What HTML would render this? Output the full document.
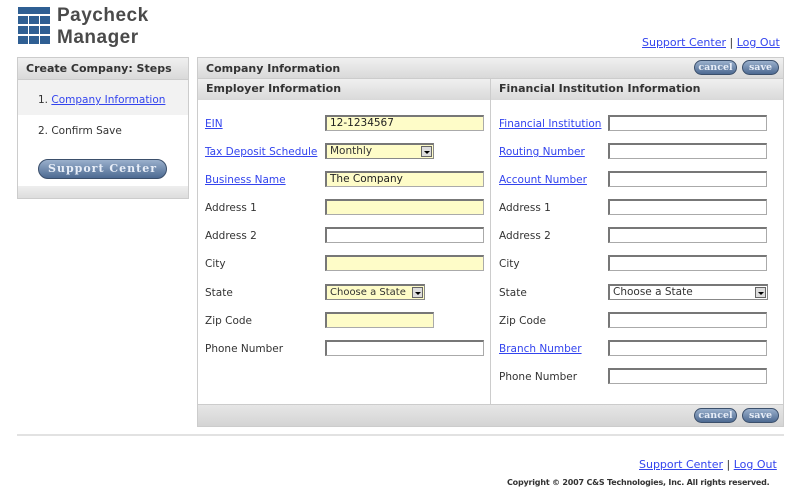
<!DOCTYPE html>
<html><head><meta charset="utf-8"><style>
*{margin:0;padding:0;box-sizing:border-box}
body{width:800px;height:500px;background:#fff;font-family:Verdana,"DejaVu Sans",sans-serif;font-size:11px;color:#333;position:relative;overflow:hidden}
.a{position:absolute}
.lnk{color:#3344ee;text-decoration:underline}
.lbl{position:absolute;font-size:10.5px;line-height:14px}
.in{position:absolute;height:16px;border:1px solid #aaa;border-top:2px solid #777;border-left:2px solid #777;background:#fff;font-size:10.5px;line-height:13px;padding-left:3px;color:#222}
.y{background:#fefcc8}
.hdr{position:absolute;background:linear-gradient(#f0f0f0,#d9d9d9);font-weight:bold;font-size:11px;color:#333;line-height:21px;padding-left:8px}
.btn{position:absolute;height:15px;border-radius:8px;background:linear-gradient(#9ab0cc,#4d6a92);border:1px solid #3b4f6b;color:#e8eef8;font-weight:bold;font-size:9.5px;text-align:center;line-height:13px;font-family:"DejaVu Serif",serif}
.sel{position:absolute;height:16px;border:1px solid #888;border-top:2px solid #777;border-left:2px solid #777;font-size:10.5px;line-height:13px;padding-left:3px;white-space:nowrap;overflow:hidden}
.sel i{position:absolute;right:1px;top:1px;width:11px;height:11px;background:#ddd;border:1px solid #666}
.sel i:after{content:"";position:absolute;left:2px;top:4px;border-left:3px solid transparent;border-right:3px solid transparent;border-top:3px solid #000}
.lg{position:absolute;left:57px;font:bold 19px/22px 'Liberation Sans',sans-serif;color:#4a4a4a;letter-spacing:0.5px}
</style></head><body>
<div class="a" style="left:18px;top:7px;width:32px;height:7px;background:#2f5f93"></div>
<div class="a" style="left:18px;top:16px;width:10px;height:8px;background:#2f5f93"></div>
<div class="a" style="left:29px;top:16px;width:10px;height:8px;background:#2f5f93"></div>
<div class="a" style="left:40px;top:16px;width:10px;height:8px;background:#2f5f93"></div>
<div class="a" style="left:18px;top:26px;width:10px;height:8px;background:#2f5f93"></div>
<div class="a" style="left:29px;top:26px;width:10px;height:8px;background:#2f5f93"></div>
<div class="a" style="left:40px;top:26px;width:10px;height:8px;background:#2f5f93"></div>
<div class="a" style="left:18px;top:36px;width:10px;height:8px;background:#2f5f93"></div>
<div class="a" style="left:29px;top:36px;width:10px;height:8px;background:#2f5f93"></div>
<div class="a" style="left:40px;top:36px;width:10px;height:8px;background:#2f5f93"></div>
<div class="lg" style="top:5px">Paycheck</div>
<div class="lg" style="top:27px">Manager</div>
<div class="a" style="left:642px;top:36px;font-size:11px"><span class="lnk">Support Center</span> | <span class="lnk">Log Out</span></div>

<div class="a" style="left:17px;top:57px;width:172px;height:142px;border:1px solid #ccc;background:#fff"></div>
<div class="hdr" style="left:17px;top:57px;width:172px;height:23px;line-height:22px;border:1px solid #ccc">Create Company: Steps</div>
<div class="a" style="left:18px;top:80px;width:170px;height:35px;background:#f2f2f2"></div>
<div class="a" style="left:38px;top:94px;font-size:10.5px">1. <span class="lnk">Company Information</span></div>
<div class="a" style="left:38px;top:125px;font-size:10.5px">2. Confirm Save</div>
<div class="btn" style="left:38px;top:159px;width:129px;height:20px;border-radius:10px;line-height:18px;font-size:11px;letter-spacing:1px">Support Center</div>
<div class="a" style="left:18px;top:186px;width:170px;height:12px;background:linear-gradient(#eee,#ddd)"></div>

<div class="a" style="left:197px;top:57px;width:587px;height:370px;border:1px solid #ccc;background:#fff"></div>
<div class="hdr" style="left:197px;top:57px;width:587px;height:22px;border:1px solid #ccc">Company Information</div>
<div class="btn" style="left:694px;top:60px;width:43px">cancel</div>
<div class="btn" style="left:742px;top:60px;width:37px">save</div>
<div class="hdr" style="left:198px;top:79px;width:293px;height:21px;line-height:20px">Employer Information</div>
<div class="hdr" style="left:491px;top:79px;width:292px;height:21px;line-height:20px">Financial Institution Information</div>
<div class="a" style="left:490px;top:79px;width:1px;height:326px;background:#ccc"></div>
<div class="a" style="left:198px;top:404px;width:585px;height:22px;background:linear-gradient(#e6e6e6,#d4d4d4);border-top:1px solid #ccc"></div>
<div class="btn" style="left:694px;top:408px;width:43px">cancel</div>
<div class="btn" style="left:742px;top:408px;width:37px">save</div>

<div class="lbl lnk" style="left:205px;top:117px">EIN</div>
<div class="in y" style="left:325px;top:115px;width:159px">12-1234567</div>
<div class="lbl lnk" style="left:205px;top:145px">Tax Deposit Schedule</div>
<div class="sel y" style="left:325px;top:143px;width:109px">Monthly<i></i></div>
<div class="lbl lnk" style="left:205px;top:173px">Business Name</div>
<div class="in y" style="left:325px;top:171px;width:159px">The Company</div>
<div class="lbl" style="left:205px;top:201px">Address 1</div>
<div class="in y" style="left:325px;top:199px;width:159px"></div>
<div class="lbl" style="left:205px;top:229px">Address 2</div>
<div class="in" style="left:325px;top:227px;width:159px"></div>
<div class="lbl" style="left:205px;top:257px">City</div>
<div class="in y" style="left:325px;top:255px;width:159px"></div>
<div class="lbl" style="left:205px;top:286px">State</div>
<div class="sel y" style="left:325px;top:284px;width:100px;font-size:10px">Choose a State<i></i></div>
<div class="lbl" style="left:205px;top:314px">Zip Code</div>
<div class="in y" style="left:325px;top:312px;width:109px"></div>
<div class="lbl" style="left:205px;top:342px">Phone Number</div>
<div class="in" style="left:325px;top:340px;width:159px"></div>

<div class="lbl lnk" style="left:499px;top:117px">Financial Institution</div>
<div class="in" style="left:608px;top:115px;width:159px"></div>
<div class="lbl lnk" style="left:499px;top:145px">Routing Number</div>
<div class="in" style="left:608px;top:143px;width:159px"></div>
<div class="lbl lnk" style="left:499px;top:173px">Account Number</div>
<div class="in" style="left:608px;top:171px;width:159px"></div>
<div class="lbl" style="left:499px;top:201px">Address 1</div>
<div class="in" style="left:608px;top:199px;width:159px"></div>
<div class="lbl" style="left:499px;top:229px">Address 2</div>
<div class="in" style="left:608px;top:227px;width:159px"></div>
<div class="lbl" style="left:499px;top:257px">City</div>
<div class="in" style="left:608px;top:255px;width:159px"></div>
<div class="lbl" style="left:499px;top:286px">State</div>
<div class="sel" style="left:608px;top:284px;width:160px">Choose a State<i></i></div>
<div class="lbl" style="left:499px;top:314px">Zip Code</div>
<div class="in" style="left:608px;top:312px;width:159px"></div>
<div class="lbl lnk" style="left:499px;top:342px">Branch Number</div>
<div class="in" style="left:608px;top:340px;width:159px"></div>
<div class="lbl" style="left:499px;top:370px">Phone Number</div>
<div class="in" style="left:608px;top:368px;width:159px"></div>

<div class="a" style="left:17px;top:434px;width:767px;height:2px;background:#e2e2e2"></div>
<div class="a" style="left:639px;top:458px;font-size:11px"><span class="lnk">Support Center</span> | <span class="lnk">Log Out</span></div>
<div class="a" style="left:507px;top:478px;font-size:8px;font-weight:bold;color:#333;white-space:nowrap;letter-spacing:-0.2px">Copyright © 2007 C&amp;S Technologies, Inc. All rights reserved.</div>
</body></html>
